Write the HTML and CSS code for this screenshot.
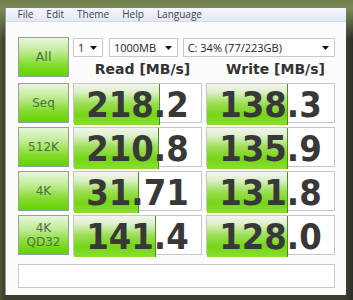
FILE: index.html
```html
<!DOCTYPE html>
<html>
<head>
<meta charset="utf-8">
<link rel="stylesheet" href="styles.css">
</head>
<body>
<div class="frame">
  <div class="window">
    <div class="menubar">
      <span class="menu">File</span>
      <span class="menu">Edit</span>
      <span class="menu">Theme</span>
      <span class="menu">Help</span>
      <span class="menu">Language</span>
    </div>
    <div class="content">
      <div class="btn btn-all">All</div>
      <div class="controls">
        <div class="selects">
          <div class="select s-count"><span>1</span><svg width="7" height="4" viewBox="0 0 7 4"><polygon points="0,0 7,0 3.5,4" fill="#111"/></svg></div>
          <div class="select s-size"><span>1000MB</span><svg width="7" height="4" viewBox="0 0 7 4"><polygon points="0,0 7,0 3.5,4" fill="#111"/></svg></div>
          <div class="select s-drive"><span>C: 34% (77/223GB)</span><svg width="7" height="4" viewBox="0 0 7 4"><polygon points="0,0 7,0 3.5,4" fill="#111"/></svg></div>
        </div>
        <div class="heads">
          <div class="head">Read [MB/s]</div>
          <div class="head">Write [MB/s]</div>
        </div>
      </div>

      <div class="btn">Seq</div>
      <div class="cell"><div class="bar" style="width:86px"></div><div class="num">218.2</div></div>
      <div class="cell"><div class="bar" style="width:81px"></div><div class="num">138.3</div></div>

      <div class="btn">512K</div>
      <div class="cell"><div class="bar" style="width:85px"></div><div class="num">210.8</div></div>
      <div class="cell"><div class="bar" style="width:81px"></div><div class="num">135.9</div></div>

      <div class="btn">4K</div>
      <div class="cell"><div class="bar" style="width:65px"></div><div class="num">31.71</div></div>
      <div class="cell"><div class="bar" style="width:81px"></div><div class="num">131.8</div></div>

      <div class="btn btn-two">4K<br>QD32</div>
      <div class="cell"><div class="bar" style="width:82px"></div><div class="num">141.4</div></div>
      <div class="cell"><div class="bar" style="width:81px"></div><div class="num">128.0</div></div>

      <div class="status"></div>
    </div>
  </div>
</div>
</body>
</html>
```

FILE: styles.css
```css
html, body {
  margin: 0;
  padding: 0;
}
body {
  width: 353px;
  height: 300px;
  overflow: hidden;
  background: #2a2a2a;
}
.frame {
  box-sizing: border-box;
  width: 353px;
  height: 300px;
  padding: 8px 7px 5px 5px;
  background:
    linear-gradient(to bottom, #6f7f4c 0px, #7a8a58 8px, rgba(60,66,48,0) 40px),
    linear-gradient(to right, #4d5638 0px, #3a3f30 5px, #3a3f30 346px, #2b2d28 353px);
}
.window {
  box-sizing: border-box;
  height: 287px;
  background: #fcfcfc;
  border-left: 1px solid #9aa08e;
  display: flex;
  flex-direction: column;
}
.menubar {
  height: 14px;
  box-sizing: border-box;
  border-bottom: 1px solid #d4dbe8;
  background: linear-gradient(to bottom, #f4f6fb, #e3e8f4);
  display: flex;
  align-items: center;
  padding-left: 5px;
  font-family: "Open Sans", "Noto Sans", sans-serif;
  font-size: 10px;
  color: #3c4250;
}
.menu {
  padding: 0 6.5px;
  line-height: 13px;
}
.content {
  display: grid;
  grid-template-columns: 51px 129px 129px;
  grid-template-rows: 42px 40px 40px 40px 40px 29px;
  column-gap: 4px;
  row-gap: 4px;
  padding: 15px 0 0 12px;
}
.btn {
  box-sizing: border-box;
  border: 1px solid #9c9c9c;
  background: linear-gradient(to bottom, #e8f6dc 0%, #bfeb95 35%, #84dc2e 70%, #62d200 100%);
  display: flex;
  align-items: center;
  justify-content: center;
  text-align: center;
  font-family: "DejaVu Sans", sans-serif;
  font-size: 12px;
  line-height: 14px;
  color: #4e7040;
}
.btn-all {
  font-size: 13px;
  height: 40px;
}
.btn-two {
  line-height: 14px;
}
.controls {
  grid-column: 2 / 4;
  display: flex;
  flex-direction: column;
}
.selects {
  display: flex;
  margin-top: 1px;
  height: 19px;
}
.select {
  box-sizing: border-box;
  height: 19px;
  border: 1px solid #c9c9c9;
  background: #fff;
  display: flex;
  align-items: center;
  justify-content: space-between;
  padding: 0 5px 0 4px;
  font-family: "Open Sans", "Noto Sans", sans-serif;
  font-size: 11px;
  color: #222;
}
.s-count { width: 30px; margin-right: 6px; }
.s-size { width: 69px; margin-right: 5px; }
.s-drive { width: 153px; }
.heads {
  display: grid;
  grid-template-columns: 129px 129px;
  column-gap: 4px;
  margin-top: 5px;
}
.head {
  text-align: center;
  font-family: "DejaVu Sans", sans-serif;
  font-weight: bold;
  font-size: 14px;
  line-height: 15px;
  color: #333;
  padding-left: 10px;
}
.cell {
  box-sizing: border-box;
  border: 1px solid #c6c6c6;
  background: #fff;
  display: grid;
}
.bar, .num {
  grid-area: 1 / 1;
}
.bar {
  box-sizing: border-box;
  height: 100%;
  border-right: 1px solid #4f8a23;
  background: linear-gradient(to bottom, #f3f5f0 0%, #dcefc8 20%, #9ade52 48%, #74d614 75%, #8ade34 100%);
}
.num {
  display: flex;
  align-items: center;
  justify-content: center;
  font-family: "DejaVu Sans Condensed", "DejaVu Sans", sans-serif;
  font-stretch: condensed;
  font-weight: bold;
  font-size: 36px;
  color: #383838;
  position: relative;
}
.status {
  grid-column: 1 / 4;
  box-sizing: border-box;
  border: 1px solid #c8c8c8;
  background: #fff;
  margin-top: 5px;
}
```
